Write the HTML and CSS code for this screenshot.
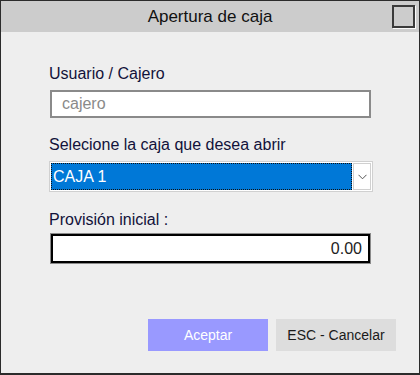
FILE: index.html
```html
<!DOCTYPE html>
<html lang="es">
<head>
    <meta charset="UTF-8">
    <meta name="viewport" content="width=device-width, initial-scale=1.0">
    <title>Apertura de caja</title>
    <link rel="stylesheet" href="styles.css">
</head>
<body>
    <div class="window">
        <div class="title-bar">
            <span></span>
            <span class="title">Apertura de caja</span>
            <button class="close-box" aria-label="Cerrar"></button>
        </div>

        <div class="content">
            <div class="field">
                <label for="cajero">Usuario / Cajero</label>
                <input type="text" id="cajero" class="text-input" placeholder="cajero">
            </div>

            <div class="field">
                <label>Selecione la caja que desea abrir</label>
                <div class="select">
                    <div class="select-value">CAJA 1</div>
                    <div class="select-arrow">
                        <svg width="9" height="6" viewBox="0 0 9 6">
                            <path d="M0.5 0.8 L4.5 4.8 L8.5 0.8" fill="none" stroke="#555" stroke-width="1"/>
                        </svg>
                    </div>
                </div>
            </div>

            <div class="field field-last">
                <label for="provision">Provisión inicial :</label>
                <input type="text" id="provision" class="text-input amount" value="0.00">
            </div>

            <div class="actions">
                <button class="btn btn-primary">Aceptar</button>
                <button class="btn btn-secondary">ESC - Cancelar</button>
            </div>
        </div>
    </div>
</body>
</html>
```

FILE: styles.css
```css
/* Base */
body {
    margin: 0;
    font-family: "Liberation Sans", Arial, sans-serif;
    background: #eeeeee;
}

.window {
    width: 420px;
    height: 375px;
    box-sizing: border-box;
    border: 1px solid #2b2b2b;
    border-bottom-width: 2px;
    background: #eeeeee;
    display: flex;
    flex-direction: column;
}

/* Title bar */
.title-bar {
    height: 31px;
    background: #cccccc;
    display: grid;
    grid-template-columns: 1fr auto 1fr;
    align-items: center;
}
.title {
    font-size: 17px;
    color: #111;
}
.close-box {
    justify-self: end;
    margin-right: 4px;
    width: 23px;
    height: 23px;
    padding: 0;
    background: #cccccc;
    border: 2px solid #3a3a3a;
    box-shadow: 1px 1px 0 #fafafa;
}

/* Form */
.content {
    flex: 1;
    display: flex;
    flex-direction: column;
    padding: 32px 0 22px 48px;
}

.field {
    display: flex;
    flex-direction: column;
    margin-bottom: 17px;
}
.field label {
    font-size: 16px;
    line-height: 20px;
    color: #12123a;
    margin-bottom: 6px;
}
.field-last label {
    margin-top: 1px;
    margin-bottom: 4px;
}

.text-input {
    width: 321px;
    height: 28px;
    box-sizing: border-box;
    margin-left: 1px;
    border: 2px solid #8a8a8a;
    background: #fff;
    padding: 0 10px;
    font-family: inherit;
    font-size: 16px;
    color: #222;
    outline: none;
}
.text-input::placeholder {
    color: #8a8a8a;
}
.text-input.amount {
    height: 29px;
    text-align: right;
    padding-right: 6px;
    border: 2px solid #000;
    box-shadow: 0 0 0 1px #8a8a8a;
    margin-left: 2px;
    width: 319px;
}

/* Fake select */
.select {
    width: 324px;
    height: 31px;
    box-sizing: border-box;
    border: 1px solid #d0d0d0;
    background: #fff;
    padding: 1px;
    display: flex;
    gap: 1px;
}
.select-value {
    flex: 1;
    background: #0078d7;
    color: #fff;
    font-size: 16px;
    line-height: 27px;
    padding-left: 2px;
    outline: 1px dotted #111;
    outline-offset: -1px;
}
.select-arrow {
    width: 16px;
    border: 1px solid #d0d0d0;
    display: flex;
    align-items: center;
    justify-content: center;
    background: #fff;
}

/* Buttons */
.actions {
    margin-top: auto;
    display: flex;
    justify-content: flex-end;
    gap: 8px;
    padding-right: 23px;
}
.btn {
    width: 120px;
    height: 32px;
    border: none;
    font-family: inherit;
    font-size: 14px;
    cursor: pointer;
}
.btn-primary {
    background: #9999ff;
    color: #fff;
}
.btn-secondary {
    background: #dddddd;
    color: #1a1a1a;
}
```
